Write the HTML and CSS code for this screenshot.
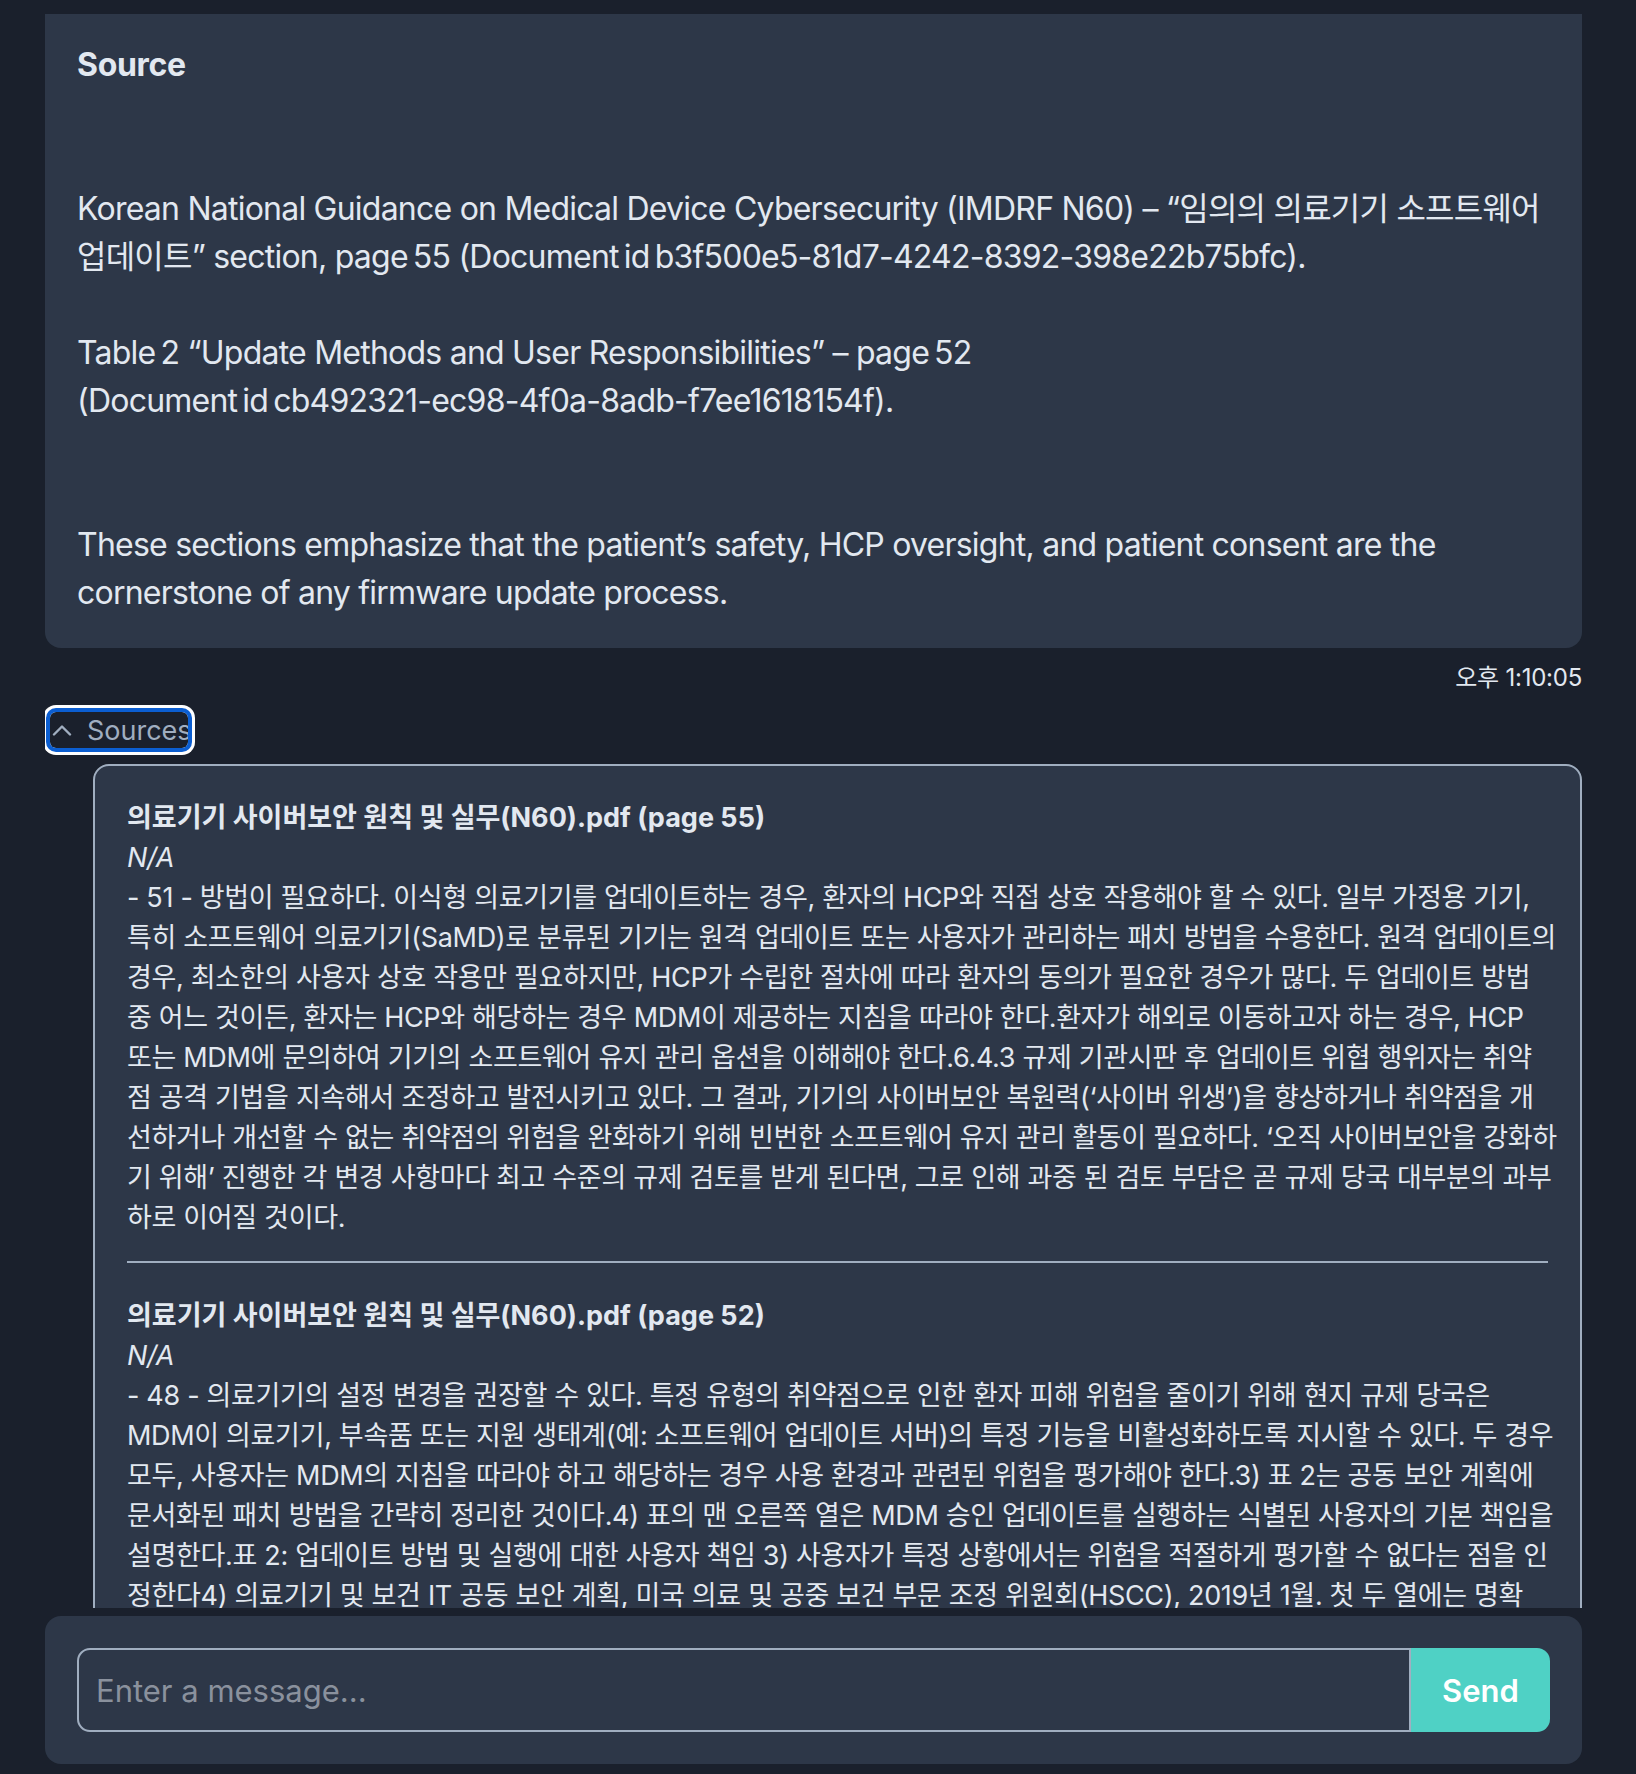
FILE: index.html
```html
<!DOCTYPE html>
<html lang="ko">
<head>
<meta charset="utf-8">
<title>Chat</title>
<link rel="stylesheet" href="styles.css">
</head>
<body>
<div class="app">
  <main class="messages">
    <div class="thread">
      <article class="bubble">
        <p class="bubble-heading">Source</p>
        <p class="bubble-para gap-lg">Korean National Guidance on Medical Device Cybersecurity (IMDRF N60) – “임의의 의료기기 소프트웨어<br>업데이트” section, page&#8239;55 (Document&#8239;id&#8239;b3f500e5-81d7-4242-8392-398e22b75bfc).</p>
        <p class="bubble-para gap-sm">Table&#8239;2 “Update Methods and User Responsibilities” – page&#8239;52<br>(Document&#8239;id&#8239;cb492321-ec98-4f0a-8adb-f7ee1618154f).</p>
        <p class="bubble-para gap-lg">These sections emphasize that the patient’s safety, HCP oversight, and patient consent are the<br>cornerstone of any firmware update process.</p>
      </article>
      <div class="timestamp">오후 1:10:05</div>
      <button class="sources-toggle" type="button">
        <svg class="chevron" width="20" height="12" viewBox="0 0 20 12" aria-hidden="true"><polyline points="2,10.5 10,2.5 18,10.5" fill="none" stroke="currentColor" stroke-width="2.4" stroke-linecap="round" stroke-linejoin="round"/></svg>
        <span>Sources</span>
      </button>
      <section class="sources-panel">
        <div class="source-entry">
          <h4 class="source-title">의료기기 사이버보안 원칙 및 실무(N60).pdf (page 55)</h4>
          <p class="source-meta">N/A</p>
          <p class="source-text">- 51 - 방법이 필요하다. 이식형 의료기기를 업데이트하는 경우, 환자의 HCP와 직접 상호 작용해야 할 수 있다. 일부 가정용 기기,<br>특히 소프트웨어 의료기기(SaMD)로 분류된 기기는 원격 업데이트 또는 사용자가 관리하는 패치 방법을 수용한다. 원격 업데이트의<br>경우, 최소한의 사용자 상호 작용만 필요하지만, HCP가 수립한 절차에 따라 환자의 동의가 필요한 경우가 많다. 두 업데이트 방법<br>중 어느 것이든, 환자는 HCP와 해당하는 경우 MDM이 제공하는 지침을 따라야 한다.환자가 해외로 이동하고자 하는 경우, HCP<br>또는 MDM에 문의하여 기기의 소프트웨어 유지 관리 옵션을 이해해야 한다.6.4.3 규제 기관시판 후 업데이트 위협 행위자는 취약<br>점 공격 기법을 지속해서 조정하고 발전시키고 있다. 그 결과, 기기의 사이버보안 복원력(‘사이버 위생’)을 향상하거나 취약점을 개<br>선하거나 개선할 수 없는 취약점의 위험을 완화하기 위해 빈번한 소프트웨어 유지 관리 활동이 필요하다. ‘오직 사이버보안을 강화하<br>기 위해’ 진행한 각 변경 사항마다 최고 수준의 규제 검토를 받게 된다면, 그로 인해 과중 된 검토 부담은 곧 규제 당국 대부분의 과부<br>하로 이어질 것이다.</p>
        </div>
        <hr class="source-divider">
        <div class="source-entry">
          <h4 class="source-title">의료기기 사이버보안 원칙 및 실무(N60).pdf (page 52)</h4>
          <p class="source-meta">N/A</p>
          <p class="source-text">- 48 - 의료기기의 설정 변경을 권장할 수 있다. 특정 유형의 취약점으로 인한 환자 피해 위험을 줄이기 위해 현지 규제 당국은<br>MDM이 의료기기, 부속품 또는 지원 생태계(예: 소프트웨어 업데이트 서버)의 특정 기능을 비활성화하도록 지시할 수 있다. 두 경우<br>모두, 사용자는 MDM의 지침을 따라야 하고 해당하는 경우 사용 환경과 관련된 위험을 평가해야 한다.3) 표 2는 공동 보안 계획에<br>문서화된 패치 방법을 간략히 정리한 것이다.4) 표의 맨 오른쪽 열은 MDM 승인 업데이트를 실행하는 식별된 사용자의 기본 책임을<br>설명한다.표 2: 업데이트 방법 및 실행에 대한 사용자 책임 3) 사용자가 특정 상황에서는 위험을 적절하게 평가할 수 없다는 점을 인<br>정한다4) 의료기기 및 보건 IT 공동 보안 계획, 미국 의료 및 공중 보건 부문 조정 위원회(HSCC), 2019년 1월. 첫 두 열에는 명확</p>
        </div>
      </section>
    </div>
  </main>
  <form class="composer" onsubmit="return false">
    <div class="input-group">
      <input class="message-input" type="text" placeholder="Enter a message...">
      <button class="send-btn" type="submit">Send</button>
    </div>
  </form>
</div>
</body>
</html>
```

FILE: styles.css
```css
* {
  box-sizing: border-box;
}

html,
body {
  margin: 0;
  height: 100%;
}

body {
  background: #1a202c;
  color: #e2e8f0;
  font-family: Inter, "Noto Sans CJK KR", sans-serif;
}

.app {
  height: 100vh;
  display: flex;
  flex-direction: column;
  gap: 8px;
  padding: 14px 54px 10px 45px;
}

.messages {
  flex: 1;
  min-height: 0;
  overflow: hidden;
}

/* scrolled position of the message list */
.thread {
  display: flex;
  flex-direction: column;
  margin-top: -53px;
}

.bubble {
  background: #2d3748;
  border-radius: 16px;
  padding: 32px 32px 31px;
  font-size: 32px;
  line-height: 48px;
  letter-spacing: -0.024em;
}

.bubble-heading {
  margin: 48px 0 0;
  font-weight: 700;
  letter-spacing: -0.01em;
}

.bubble-para {
  margin: 0;
}

.gap-lg {
  margin-top: 96px;
}

.gap-sm {
  margin-top: 48px;
}

.timestamp {
  align-self: flex-end;
  margin-top: 12px;
  font-size: 24px;
  line-height: 36px;
  letter-spacing: -0.01em;
  color: #e2e8f0;
}

.sources-toggle {
  align-self: flex-start;
  display: flex;
  align-items: center;
  gap: 15px;
  width: 138px;
  height: 36px;
  margin: 16px 0 0 5px;
  padding: 0 0 0 2px;
  background: transparent;
  border: 0;
  border-radius: 6px;
  color: #a0aec0;
  font-family: Inter, "Noto Sans CJK KR", sans-serif;
  font-size: 27px;
  white-space: nowrap;
  overflow: visible;
  outline: 4px solid #0b5ed1;
  outline-offset: 0;
  box-shadow: 0 0 0 7px #ffffff;
  cursor: pointer;
}

.chevron {
  flex: none;
}

.sources-panel {
  margin: 16px 0 0 48px;
  background: #2d3748;
  border: 2px solid #a0aec0;
  border-radius: 16px;
  padding: 32px;
  font-size: 27px;
  line-height: 40px;
  letter-spacing: -0.012em;
}

.source-title {
  margin: 0;
  font-size: inherit;
  font-weight: 700;
  letter-spacing: 0;
}

.source-meta {
  margin: 0;
  font-style: italic;
}

.source-text {
  margin: 0;
  white-space: nowrap;
}

.source-divider {
  margin: 23px 0 33px;
  border: 0;
  border-top: 2px solid #a0aec0;
}

.composer {
  flex: none;
  background: #2d3748;
  border-radius: 16px;
  padding: 32px;
}

.input-group {
  display: flex;
}

.message-input {
  flex: 1;
  min-width: 0;
  height: 84px;
  padding: 0 17px;
  background: transparent;
  border: 2px solid #a0aec0;
  border-radius: 13px 0 0 13px;
  color: #e2e8f0;
  font-family: Inter, "Noto Sans CJK KR", sans-serif;
  font-size: 31px;
  outline: none;
}

.message-input::placeholder {
  color: #8a919d;
}

.send-btn {
  flex: none;
  width: 139px;
  height: 84px;
  border: 0;
  border-radius: 0 13px 13px 0;
  background: #4fd1c5;
  color: #ffffff;
  font-family: Inter, "Noto Sans CJK KR", sans-serif;
  font-size: 31px;
  font-weight: 600;
  cursor: pointer;
}
```
